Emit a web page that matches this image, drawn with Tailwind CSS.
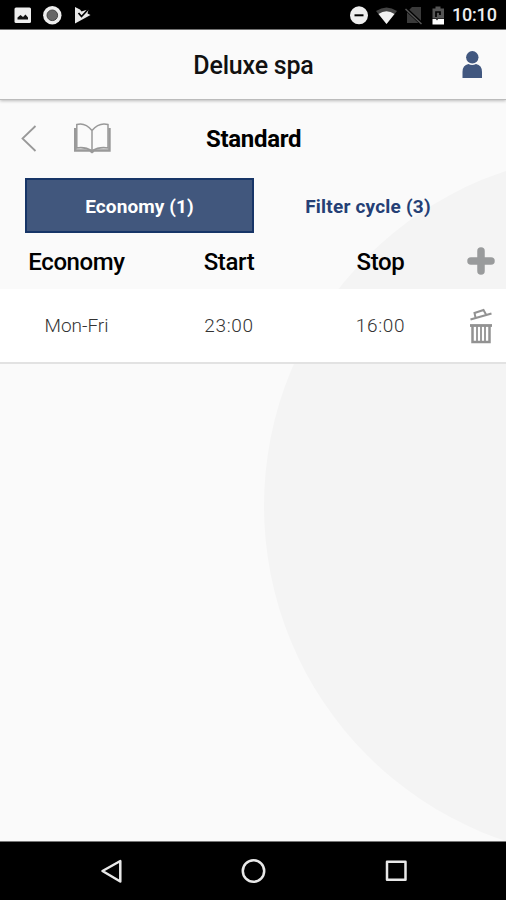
<!DOCTYPE html>
<html lang="en">
<head>
  <meta charset="UTF-8" />
  <meta name="viewport" content="width=device-width, initial-scale=1.0" />
  <title>Deluxe spa</title>
  <script src="https://cdn.jsdelivr.net/npm/@tailwindcss/browser@4"></script>
</head>
<body class="bg-[#fafafa] text-[#111] font-[Roboto,sans-serif]">
  <div class="w-[506px] h-[900px] flex flex-col overflow-hidden">

    <!-- Status bar -->
    <div class="h-[30px] shrink-0 bg-black border-b border-[#777] flex items-center justify-between pl-[14px] pr-[9px]">
      <svg class="w-[78px] h-[29px]" viewBox="14 0 78 29">
        <rect x="14.500" y="7.500" width="16.500" height="15.500" rx="1.500" fill="#eee" />
        <path d="M17.500 19.500v-2l3-2.500 2.500 2 2.500-2.500 2.500 3v2z" fill="#111" />
        <circle cx="52.300" cy="15.300" r="9.200" fill="#eee" />
        <circle cx="52.300" cy="15.300" r="5.300" fill="#666" stroke="#444" />
        <path d="M75 7l5 2.500 1.500 2 3-1 4-1-1 4 3 1.500L75 23.500z" fill="#e8e8e8" />
        <path d="M78.500 13l3 3.500 7-7.500" fill="none" stroke="#000" stroke-width="1.700" />
      </svg>
      <div class="flex items-center">
        <svg class="w-[100px] h-[29px]" viewBox="348 0 100 29">
          <circle cx="359" cy="15.300" r="9" fill="#eee" />
          <path d="M354.500 15.300h9" stroke="#000" stroke-width="2" />
          <path d="M376 11Q386.500 4 397 11L386.500 24z" fill="#444" />
          <path d="M378.500 14Q386.500 8.500 394.500 14L386.500 24z" fill="#f2f2f2" />
          <path d="M412 7h9v16h-14V12z" fill="#3a3a3a" />
          <path d="M405 8l17 16" stroke="#000" stroke-width="3.500" />
          <path d="M405.500 9l16 15" stroke="#555" stroke-width="1.500" />
          <path d="M432.500 8.500h3V6.500h5v2h3.500v10h-11.500z" fill="#555" />
          <path d="M436 17v-5h4v3" fill="none" stroke="#000" stroke-width="1.700" />
          <path d="M432.500 19h3.500l1 1.500 1-1.500h6v5.500h-11.500z" fill="#fff" />
        </svg>
        <span class="w-[45px] ml-1 pt-px text-[18px] font-medium leading-[30px] text-[#eee] tracking-[-0.2px]">10:10</span>
      </div>
    </div>

    <!-- App bar -->
    <header class="relative z-10 h-[70px] shrink-0 bg-[#fafafa] border-b border-[#bbb] shadow-[0_1px_3px_rgba(0,0,0,0.25)] grid grid-cols-[60px_1fr_60px] items-center">
      <span></span>
      <h1 class="text-center text-[25px] font-medium tracking-[-0.2px] pt-[3px] pl-px">Deluxe spa</h1>
      <svg class="w-[22px] h-[28px] ml-[15px] mt-px" viewBox="0 0 22 28" fill="#41577f">
        <circle cx="11.300" cy="6.300" r="6.200" />
        <path d="M1.500 27v-6q0-7 6-8 3.500 2 7.500 0 6 1 6 8v6z" />
      </svg>
    </header>

    <main class="relative flex-1 overflow-hidden">
      <!-- Background disc -->
      <div class="absolute left-[264px] top-[53px] size-[706px] rounded-full bg-[#f4f4f4]"></div>

      <div class="relative">
        <div class="h-[78px] flex items-center">
          <svg class="w-[110px] h-[40px] shrink-0 ml-[5px]" viewBox="5 0 110 40" fill="none" stroke="#999" stroke-width="1.700">
            <path d="M35.500 7L22.500 19.500 35.500 32" stroke-width="1.800" />
            <path d="M92 11.500Q85 3 76.800 5.500v23.500Q85 27.500 92 32 99 27.500 108 29v-23.500Q99 3 92 11.500zM92 11.500v22" stroke-width="1.500" />
            <path d="M75.200 9v22.500H90l2 1.500 2-1.500h15.500V9" stroke-width="2.400" />
          </svg>
          <h2 class="ml-[91px] text-[24px] font-bold tracking-[-0.3px] text-black">Standard</h2>
        </div>

        <!-- Tabs -->
        <div class="h-[55px] flex pl-[25px] text-[19px] font-bold">
          <button class="w-[229px] bg-[#41577d] border-2 border-[#173567] pt-[3px] text-white tracking-[0.1px]">Economy (1)</button>
          <button class="w-[228px] pt-[3px] text-[#253f75] tracking-[0.2px]">Filter cycle (3)</button>
        </div>

        <!-- Column titles -->
        <div class="h-[56px] grid grid-cols-[153px_152px_151px_50px] items-center text-center text-[24px] font-medium tracking-[-0.4px] text-black">
          <span class="pt-px">Economy</span>
          <span class="pt-px">Start</span>
          <span class="pt-px">Stop</span>
          <svg class="w-[28px] h-[28px] ml-[11px]" viewBox="0 0 28 28">
            <path d="M14 4v20M4 14h20" stroke="#999b9c" stroke-width="7.500" stroke-linecap="round" />
          </svg>
        </div>

        <!-- Cycle row -->
        <div class="h-[75px] bg-white border-b-2 border-[#e2e2e2] grid grid-cols-[153px_152px_151px_50px] items-center text-center text-[19px] font-light text-[#333]">
          <span class="pt-[2px]">Mon-Fri</span>
          <span class="pt-[2px] tracking-[0.7px]">23:00</span>
          <span class="pt-[2px] tracking-[0.7px]">16:00</span>
          <svg class="w-[26px] h-[36px] ml-[12px]" viewBox="0 0 26 36" fill="none" stroke="#929292">
            <path d="M2.500 11.500L23.500 5.500" stroke-width="2.300" />
            <path d="M7.500 9.500L6.500 5 15.500 2 18 6.500" stroke-width="2" />
            <path d="M2 17.500h22" stroke-width="2.800" />
            <path d="M4.500 18v16h17V18" stroke-width="2.500" />
            <path d="M9 18v16M13 18v16M17 18v16" stroke-width="1.800" />
          </svg>
        </div>
      </div>
    </main>

    <!-- Navigation bar -->
    <nav class="h-[59px] shrink-0 bg-black border-t border-[#777]">
      <svg class="w-full h-[58px]" viewBox="0 842 506 58" fill="none" stroke="#e8e8e8" stroke-width="2.500" stroke-linejoin="round">
        <path d="M120.300 861v20.500L102.500 871z" />
        <circle cx="253.500" cy="871" r="10.700" />
        <rect x="387" y="861.800" width="18.500" height="18" />
      </svg>
    </nav>
  </div>
</body>
</html>
